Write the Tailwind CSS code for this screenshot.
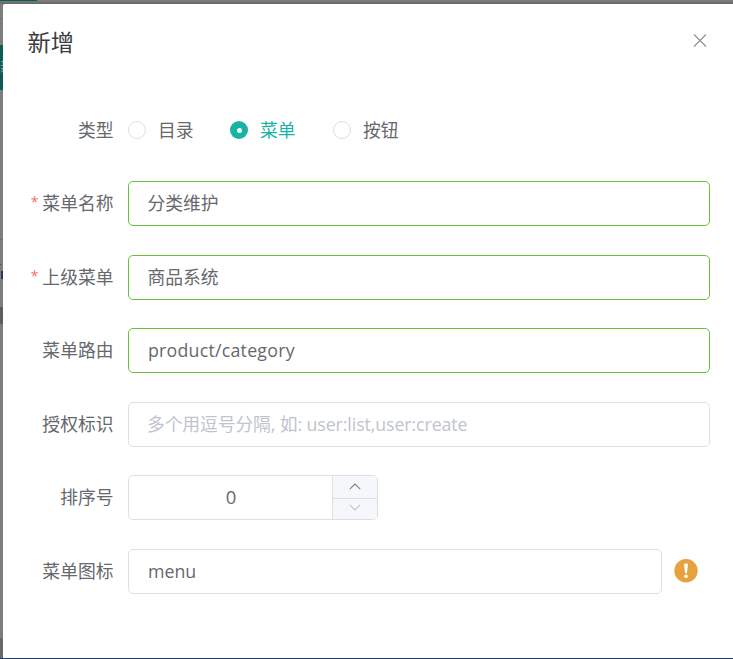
<!DOCTYPE html>
<html lang="zh-CN">
<head>
<meta charset="utf-8">
<title>新增</title>
<script src="https://cdn.jsdelivr.net/npm/@tailwindcss/browser@4"></script>
</head>
<body class="w-[733px] h-[659px] overflow-hidden bg-[#7b7b7b] font-['Open_Sans','Noto_Sans_CJK_SC',sans-serif] text-[17.8px] text-[#66686c]">
<div class="flex h-[659px] flex-col">
  <!-- dimmed page behind the dialog -->
  <div class="h-1 shrink-0 bg-linear-to-b from-[#808080] to-[#666]"><div class="h-px w-[37px] bg-[#0c5c55]"></div></div>
  <div class="flex h-[654px]">
    <div class="flex w-[3px] shrink-0 flex-col overflow-hidden bg-[#7d7d7d]">
      <div class="h-[15px] border-b border-[#707070]"></div>
      <div class="mt-[26px] h-[45px] shrink-0 bg-[#0c5c55] pt-[14px]"><div class="w-[18px] text-[16px] leading-[16px] text-[#8b9b99]">新</div></div>
      <div class="mt-[149px] h-px shrink-0 bg-[#707070]"></div>
      <div class="mt-[24px] h-px w-px shrink-0 bg-[#1d5c8f]"></div>
      <div class="mt-[6px] ml-[1px] h-[8px] w-[2px] shrink-0 bg-[#263a5c]"></div>
      <div class="mt-[28px] h-[17px] shrink-0 bg-[#5e5e5e]"></div>
      <div class="mt-[314px] h-[20px] shrink-0 bg-[#696969]"></div>
    </div>
    <div class="w-[730px] rounded-tl-[2px] bg-white">
      <header class="flex h-[78px] items-center justify-between pr-[26px] pl-[24.5px]">
        <h1 class="mt-[-2px] text-[23.2px] leading-[30px] text-[#3a3b3e]">新增</h1>
        <svg class="mt-[-6px] size-[14px]" viewBox="0 0 14 14" fill="none" stroke="#909399" stroke-width="1.2"><path d="M1 1.500l12 12M13 1.500L1 13.500"/></svg>
      </header>
      <form>
        <div class="mt-[26px] flex h-[45px] items-center">
          <div class="w-[110.5px] pb-[1px] text-right leading-[26px]">类型</div>
          <div class="mt-[-1px] ml-[14.5px] flex items-center leading-[26px]">
            <span class="size-[18px] rounded-full border border-[#dcdfe6]"></span><span class="ml-[12px] w-[36px]">目录</span>
            <span class="ml-[36px] flex size-[18px] items-center justify-center rounded-full bg-[#17b3a3]"><span class="size-[5px] rounded-full bg-white"></span></span><span class="ml-[12px] w-[36px] text-[#17b3a3]">菜单</span>
            <span class="ml-[37px] size-[18px] rounded-full border border-[#dcdfe6]"></span><span class="ml-[12px]">按钮</span>
          </div>
        </div>
        <div class="mt-[28px] flex h-[45px] items-center">
          <div class="flex w-[110.5px] justify-end pb-[2px] leading-[26px]"><span class="mt-[-1px] mr-[4px] text-[14px] text-[#f56c6c]">*</span>菜单名称</div>
          <div class="ml-[14.5px] flex h-[45px] w-[582px] items-center rounded-[5px] border border-[#67c23a] pl-[18.5px]">分类维护</div>
        </div>
        <div class="mt-[29px] flex h-[45px] items-center">
          <div class="flex w-[110.5px] justify-end pb-[2px] leading-[26px]"><span class="mt-[-1px] mr-[4px] text-[14px] text-[#f56c6c]">*</span>上级菜单</div>
          <div class="ml-[14.5px] flex h-[45px] w-[582px] items-center rounded-[5px] border border-[#67c23a] pl-[18.5px]">商品系统</div>
        </div>
        <div class="mt-[28px] flex h-[45px] items-center">
          <div class="w-[110.5px] pb-[2px] text-right leading-[26px]">菜单路由</div>
          <div class="ml-[14.5px] flex h-[45px] w-[582px] items-center rounded-[5px] border border-[#67c23a] pl-[19px] tracking-[0.22px]">product/category</div>
        </div>
        <div class="mt-[29px] flex h-[45px] items-center">
          <div class="w-[110.5px] pb-[2px] text-right leading-[26px]">授权标识</div>
          <div class="ml-[14.5px] flex h-[45px] w-[582px] items-center rounded-[5px] border border-[#dcdfe6] pl-[18px] tracking-[-0.1px] whitespace-pre text-[#c0c4cc]">多个用逗号分隔, 如: user:list,user:create</div>
        </div>
        <div class="mt-[28px] flex h-[45px] items-center">
          <div class="w-[110.5px] pb-[2px] text-right leading-[26px]">排序号</div>
          <div class="ml-[14.5px] flex h-[45px] w-[250px] overflow-hidden rounded-[5px] border border-[#dcdfe6]">
            <div class="flex flex-1 items-center justify-center pb-px pl-px text-[18.5px]">0</div>
            <div class="flex w-[45px] flex-col border-l border-[#dcdfe6] bg-[#f5f7fa]">
              <div class="flex h-[23px] items-center justify-center border-b border-[#dcdfe6]"><svg class="mt-[-2px] h-[7px] w-[12px]" viewBox="0 0 12 7" fill="none" stroke="#808389" stroke-width="1.1"><path d="M.8 6.200L6 1l5.200 5.200"/></svg></div>
              <div class="flex flex-1 items-center justify-center"><svg class="mt-[-3px] h-[7px] w-[12px]" viewBox="0 0 12 7" fill="none" stroke="#c0c4cc" stroke-width="1.1"><path d="M.8.8L6 6 11.200.8"/></svg></div>
            </div>
          </div>
        </div>
        <div class="mt-[29px] flex h-[45px] items-center">
          <div class="w-[110.5px] pb-[2px] text-right leading-[26px]">菜单图标</div>
          <div class="ml-[14.5px] flex h-[45px] w-[534px] items-center rounded-[5px] border border-[#dcdfe6] pl-[19px]">menu</div>
          <svg class="mt-[-2px] ml-[12px] size-[24px]" viewBox="0 0 24 24"><circle cx="12" cy="11.700" r="11.700" fill="#e6a23c"/><path d="M12 4.200c1.300 0 2 .8 1.900 2l-.9 7.300c-.1.800-.5 1.100-1 1.100s-.9-.3-1-1.100l-.9-7.300c-.1-1.200.6-2 1.900-2z" fill="#fff"/><circle cx="12" cy="17.300" r="1.800" fill="#fff"/></svg>
        </div>
      </form>
    </div>
  </div>
  <div class="h-px shrink-0 bg-[#16406b]"></div>
</div>
</body>
</html>
